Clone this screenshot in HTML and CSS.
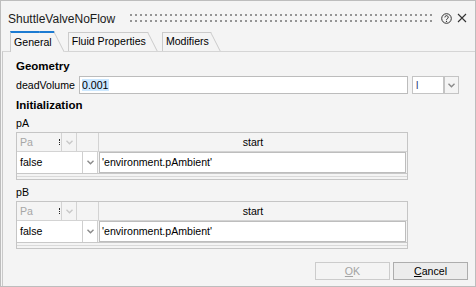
FILE: index.html
```html
<!DOCTYPE html>
<html>
<head>
    <title>ShuttleValveNoFlow</title>
    <meta charset="utf-8" />

    <link rel="stylesheet" href="styles.css">

</head>
<body>

    <div id="dialog">

        <div class="title_bar">
            <span class="title_text">ShuttleValveNoFlow</span>
            <div class="grip"></div>
            <svg class="help_icon" width="11" height="11" viewBox="0 0 11 11">
                <circle cx="5.5" cy="5.5" r="4.8" fill="none" stroke="#333" stroke-width="1" />
                <path d="M3.9 4.4 A1.65 1.65 0 1 1 6.3 5.8 C5.7 6.1 5.5 6.4 5.5 7.1" fill="none" stroke="#333" stroke-width="1" />
                <circle cx="5.5" cy="8.4" r="0.6" fill="#333" />
            </svg>
            <svg class="close_icon" width="10" height="10" viewBox="0 0 10 10">
                <path d="M1 1 L9 9 M9 1 L1 9" stroke="#333" stroke-width="1.1" />
            </svg>
        </div>

        <div class="tab_strip">
            <div class="tab tab_active">General</div>
            <div class="tab">Fluid Properties</div>
            <div class="tab">Modifiers</div>
        </div>

        <div class="tab_page">

            <div class="group_title">Geometry</div>

            <div class="field_row">
                <div class="field_label">deadVolume</div>
                <div class="value_input"><span class="selected">0.001</span></div>
                <div class="unit_box">l</div>
                <div class="unit_button">
                    <svg class="chevron" width="7" height="5" viewBox="0 0 7 5"><polyline points="0.5,0.8 3.5,3.8 6.5,0.8" fill="none" stroke="#8a8a8a" stroke-width="1.4" /></svg>
                </div>
            </div>

            <div class="group_title init_title">Initialization</div>

            <div class="param_label">pA</div>
            <div class="param_table">
                <div class="table_head">
                    <div class="head_unit">Pa<span class="col_mark"></span></div>
                    <div class="head_arrow">
                        <svg class="chevron" width="7" height="5" viewBox="0 0 7 5"><polyline points="0.5,0.8 3.5,3.8 6.5,0.8" fill="none" stroke="#c8c8c8" stroke-width="1.4" /></svg>
                    </div>
                    <div class="head_blank"></div>
                    <div class="head_start">start</div>
                </div>
                <div class="table_row">
                    <div class="cell_value">false</div>
                    <div class="cell_arrow">
                        <svg class="chevron" width="7" height="5" viewBox="0 0 7 5"><polyline points="0.5,0.8 3.5,3.8 6.5,0.8" fill="none" stroke="#8a8a8a" stroke-width="1.4" /></svg>
                    </div>
                    <div class="cell_text">'environment.pAmbient'</div>
                </div>
                <div class="table_foot"></div>
            </div>

            <div class="param_label">pB</div>
            <div class="param_table">
                <div class="table_head">
                    <div class="head_unit">Pa<span class="col_mark"></span></div>
                    <div class="head_arrow">
                        <svg class="chevron" width="7" height="5" viewBox="0 0 7 5"><polyline points="0.5,0.8 3.5,3.8 6.5,0.8" fill="none" stroke="#c8c8c8" stroke-width="1.4" /></svg>
                    </div>
                    <div class="head_blank"></div>
                    <div class="head_start">start</div>
                </div>
                <div class="table_row">
                    <div class="cell_value">false</div>
                    <div class="cell_arrow">
                        <svg class="chevron" width="7" height="5" viewBox="0 0 7 5"><polyline points="0.5,0.8 3.5,3.8 6.5,0.8" fill="none" stroke="#8a8a8a" stroke-width="1.4" /></svg>
                    </div>
                    <div class="cell_text">'environment.pAmbient'</div>
                </div>
                <div class="table_foot"></div>
            </div>

            <div class="button_row">
                <div class="button button_disabled"><span class="mnemonic">O</span>K</div>
                <div class="button"><span class="mnemonic">C</span>ancel</div>
            </div>

        </div>

    </div>

</body>
</html>
```

FILE: styles.css
```css
body {
    margin: 0;
    font-family: "Liberation Sans", Arial, sans-serif;
    font-size: 10.6px;
    color: #000;
}

#dialog {
    width: 476px;
    height: 287px;
    box-sizing: border-box;
    border: 1px solid #bdbdbd;
    background: #f4f4f4;
    display: flex;
    flex-direction: column;
}

/* title bar */
.title_bar {
    height: 30px;
    box-sizing: border-box;
    padding: 6px 8px 0 7px;
    display: flex;
    align-items: center;
}

.title_text {
    font-size: 12px;
    color: #1a1a1a;
}

.grip {
    flex: 1;
    align-self: flex-start;
    height: 8px;
    margin: 7px 6px 0 15px;
    background-image: linear-gradient(to right, transparent 2px, #f4f4f4 2px), linear-gradient(#959595 2px, transparent 2px);
    background-size: 5px 6px;
}

.help_icon {
    align-self: flex-start;
    margin-top: 6px;
}

.close_icon {
    align-self: flex-start;
    margin-top: 6px;
    margin-left: 5px;
}

/* tabs */
.tab_strip {
    height: 20px;
    display: flex;
    align-items: flex-end;
    padding-left: 9px;
}

.tab {
    position: relative;
    z-index: 1;
    height: 19px;
    box-sizing: border-box;
    padding: 0 1px 0 3px;
    margin-right: 15px;
    border-top: 1px solid #cbcbcb;
    border-left: 1px solid #cbcbcb;
    line-height: 17px;
}

.tab::after {
    content: "";
    position: absolute;
    z-index: -1;
    top: -1px;
    bottom: 0;
    right: -1px;
    width: 14px;
    border-top: 1px solid #cbcbcb;
    border-right: 1px solid #cbcbcb;
    transform: skewX(27deg);
    transform-origin: 0 0;
}

.tab_active {
    height: 21px;
    margin-bottom: -1px;
    border-top: 2px solid #1c7bd2;
    background: #f4f4f4;
    z-index: 2;
    line-height: 18px;
}

.tab_active::after {
    top: -2px;
    border-top: 2px solid #1c7bd2;
    background: #f4f4f4;
}

.tab_page {
    flex: 1;
    margin-left: 1px;
    border-top: 1px solid #d5d5d5;
    border-left: 1px solid #c9c9c9;
    padding: 6px 0 0 13px;
    display: flex;
    flex-direction: column;
}

.group_title {
    font-weight: bold;
    font-size: 11.5px;
    line-height: 16px;
}

.init_title {
    margin-top: 3px;
    margin-bottom: 1px;
}

/* deadVolume row */
.field_row {
    display: flex;
    height: 18px;
    margin-top: 2px;
}

.field_label {
    width: 63px;
    line-height: 18px;
}

.value_input {
    width: 329px;
    box-sizing: border-box;
    border: 1px solid #bcbcbc;
    background: #fff;
    padding-left: 2px;
    line-height: 16px;
}

.selected {
    background: #cce8ff;
}

.unit_box {
    width: 32px;
    margin-left: 4px;
    box-sizing: border-box;
    border: 1px solid #c4c4c4;
    background: #fff;
    padding-left: 3px;
    line-height: 16px;
    color: #1f3a78;
}

.unit_button {
    width: 15px;
    box-sizing: border-box;
    border: 1px solid #c4c4c4;
    display: flex;
    align-items: center;
    justify-content: center;
}

/* parameter tables */
.param_label {
    line-height: 18px;
}

.param_table {
    width: 392px;
    box-sizing: border-box;
    border: 1px solid #c5c5c5;
    margin-bottom: 3px;
}

.table_head {
    display: flex;
    height: 19px;
    box-sizing: border-box;
    border-bottom: 1px solid #d3d3d3;
    line-height: 18px;
}

.head_unit {
    width: 45px;
    box-sizing: border-box;
    border-right: 1px solid #d3d3d3;
    padding-left: 3px;
    color: #a6a6a6;
    display: flex;
    align-items: center;
}

.col_mark {
    margin-left: auto;
    margin-right: 1px;
    height: 6px;
    border-left: 1px dotted #222;
}

.head_arrow {
    width: 15px;
    box-sizing: border-box;
    border-right: 1px solid #d3d3d3;
    display: flex;
    align-items: center;
    justify-content: center;
}

.head_blank {
    width: 22px;
    box-sizing: border-box;
    border-right: 1px solid #d3d3d3;
}

.head_start {
    flex: 1;
    text-align: center;
}

.table_row {
    display: flex;
    height: 22px;
    box-sizing: border-box;
    border-bottom: 1px solid #c8c8c8;
    line-height: 21px;
}

.cell_value {
    width: 66px;
    box-sizing: border-box;
    border-right: 1px solid #cfcfcf;
    padding-left: 3px;
    background: #fff;
}

.cell_arrow {
    width: 15px;
    box-sizing: border-box;
    border-right: 1px solid #cfcfcf;
    background: #fff;
    display: flex;
    align-items: center;
    justify-content: center;
}

.cell_text {
    flex: 1;
    margin: 0 1px 0 1px;
    box-sizing: border-box;
    border: 1px solid #bdbdbd;
    background: #fff;
    padding-left: 2px;
    line-height: 19px;
}

.table_foot {
    height: 2px;
    border-bottom: 1px solid #dadada;
    margin-bottom: 2px;
}

/* buttons */
.button_row {
    display: flex;
    justify-content: flex-end;
    gap: 3px;
    margin-top: 10px;
    padding-right: 7px;
}

.button {
    width: 75px;
    height: 18px;
    box-sizing: border-box;
    border: 1px solid #adadad;
    background: #ececec;
    text-align: center;
    line-height: 16px;
}

.button_disabled {
    border-color: #cccccc;
    background: #f4f4f4;
    color: #a3a3a3;
}

.mnemonic {
    text-decoration: underline;
}
```
